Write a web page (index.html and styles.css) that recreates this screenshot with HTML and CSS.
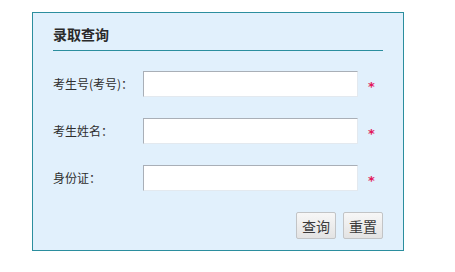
FILE: index.html
```html
<!DOCTYPE html>
<html lang="zh-CN">
<head>
<meta charset="utf-8">
<title>录取查询</title>
<link rel="stylesheet" href="styles.css">
</head>
<body>
<div class="panel">
  <div class="panel-title">录取查询</div>
  <form class="query-form">
    <div class="row">
      <label class="label">考生号(考号)：</label>
      <input class="field" type="text">
      <span class="req">*</span>
    </div>
    <div class="row">
      <label class="label">考生姓名：</label>
      <input class="field" type="text">
      <span class="req">*</span>
    </div>
    <div class="row">
      <label class="label">身份证：</label>
      <input class="field" type="text">
      <span class="req">*</span>
    </div>
    <div class="actions">
      <button class="btn" type="button">查询</button>
      <button class="btn" type="reset">重置</button>
    </div>
  </form>
</div>
</body>
</html>
```
FILE: styles.css
```css
html, body {
  margin: 0;
  padding: 0;
  background: #ffffff;
}
body {
  font-family: "Noto Sans CJK SC", "Liberation Sans", sans-serif;
  color: #2e2e2e;
  font-size: 12px;
}
.panel {
  box-sizing: border-box;
  width: 372px;
  height: 239px;
  margin: 12px 0 0 32px;
  border: 1px solid #2b8e9e;
  background: #e1f0fc;
  padding: 0 20px 10px 20px;
}
.panel-title {
  font-size: 14px;
  font-weight: bold;
  line-height: 20px;
  padding: 11px 0 6px 0;
  border-bottom: 1px solid #2b8e9e;
  color: #2a2a2a;
}
.query-form {
  display: flex;
  flex-direction: column;
  gap: 21px;
  padding-top: 20px;
  margin: 0;
}
.row {
  display: flex;
  align-items: center;
  height: 26px;
}
.label {
  width: 90px;
  flex: none;
  line-height: 26px;
  white-space: nowrap;
}
.field {
  box-sizing: border-box;
  width: 215px;
  height: 26px;
  margin: 0;
  padding: 0 4px;
  background: #ffffff;
  border: 1px solid;
  border-color: #a9afb7 #e3e9ef #e3e9ef #a9afb7;
  outline: none;
}
.req {
  margin-left: 10px;
  color: #e2185b;
  font-family: "DejaVu Sans", sans-serif;
  font-size: 13px;
  font-weight: bold;
  line-height: 26px;
  position: relative;
  top: 3px;
}
.actions {
  display: flex;
  justify-content: flex-end;
  gap: 7px;
}
.btn {
  box-sizing: border-box;
  width: 40px;
  height: 27px;
  margin: 0;
  padding: 0;
  font-family: "Noto Sans CJK SC", sans-serif;
  font-size: 14px;
  color: #3a3a3a;
  border: 1px solid #c2c4c6;
  border-radius: 2px;
  background: linear-gradient(#f7f7f7, #e3e3e3);
}
```
